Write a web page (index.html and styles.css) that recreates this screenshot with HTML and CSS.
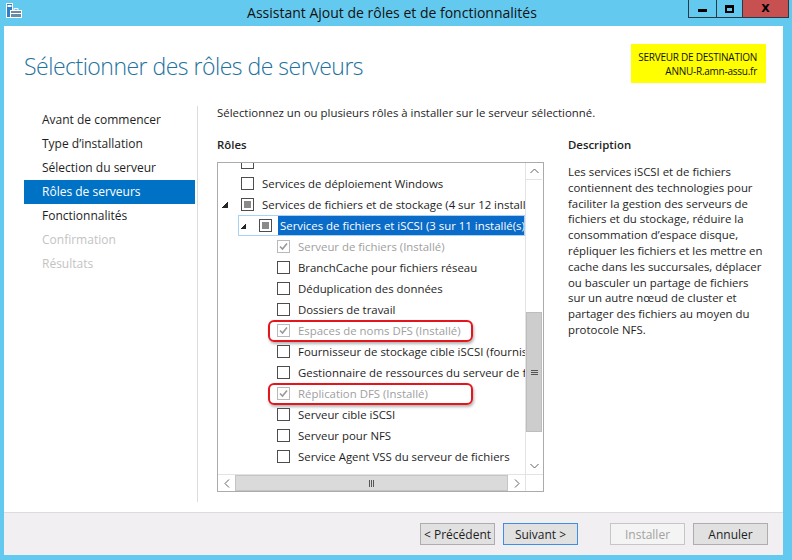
FILE: index.html
```html
<!DOCTYPE html>
<html lang="fr">
<head>
    <meta charset="UTF-8">
    <title>Assistant Ajout de rôles et de fonctionnalités</title>
    <link rel="stylesheet" href="styles.css">
</head>
<body>
    <div class="window">
        <div class="titlebar">
            <div class="app-icon">
                <svg width="22" height="18" viewBox="0 0 22 18">
                    <rect x="6.5" y="3.5" width="6" height="14" fill="#2f7fc8" stroke="#fff"/>
                    <rect x="7.5" y="5" width="4" height="2" fill="#fff"/>
                    <rect x="10.5" y="10.5" width="11" height="7" fill="#6a8aa6" stroke="#fff"/>
                    <path d="M14 10.5 V8.5 H18 V10.5" fill="none" stroke="#fff"/>
                    <path d="M10.5 13.5 H21.5" stroke="#fff"/>
                </svg>
            </div>
            <div class="title">Assistant Ajout de rôles et de fonctionnalités</div>
            <div class="controls">
                <span class="ctl min"><i></i></span>
                <span class="ctl max"><i></i></span>
                <span class="ctl close">X</span>
            </div>
        </div>

        <div class="client">
            <div class="header">
                <h1>Sélectionner des rôles de serveurs</h1>
                <div class="dest">SERVEUR DE DESTINATION<br>ANNU-R.amn-assu.fr</div>
            </div>

            <div class="main">
                <ul class="steps">
                    <li>Avant de commencer</li>
                    <li>Type d’installation</li>
                    <li>Sélection du serveur</li>
                    <li class="active">Rôles de serveurs</li>
                    <li>Fonctionnalités</li>
                    <li class="off">Confirmation</li>
                    <li class="off">Résultats</li>
                </ul>

                <div class="content">
                    <p class="intro">Sélectionnez un ou plusieurs rôles à installer sur le serveur sélectionné.</p>
                    <div class="columns">
                        <div class="roles">
                            <div class="caption">Rôles</div>
                            <div class="listbox">
                                <div class="list-area">
                                    <div class="rows">
                                        <div class="row lvl0 cut"><span class="exp"></span><span class="cb"></span><span class="txt"></span></div>
                                        <div class="row lvl0"><span class="exp"></span><span class="cb"></span><span class="txt">Services de déploiement Windows</span></div>
                                        <div class="row lvl0"><span class="exp open"></span><span class="cb part"></span><span class="txt">Services de fichiers et de stockage (4 sur 12 installé(s))</span></div>
                                        <div class="row lvl1 sel"><span class="exp open"></span><span class="cb part"></span><span class="txt">Services de fichiers et iSCSI (3 sur 11 installé(s))</span></div>
                                        <div class="row lvl2 dis"><span class="exp"></span><span class="cb on"></span><span class="txt">Serveur de fichiers (Installé)</span></div>
                                        <div class="row lvl2"><span class="exp"></span><span class="cb"></span><span class="txt">BranchCache pour fichiers réseau</span></div>
                                        <div class="row lvl2"><span class="exp"></span><span class="cb"></span><span class="txt">Déduplication des données</span></div>
                                        <div class="row lvl2"><span class="exp"></span><span class="cb"></span><span class="txt">Dossiers de travail</span></div>
                                        <div class="row lvl2 dis"><span class="exp"></span><span class="cb on"></span><span class="txt">Espaces de noms DFS (Installé)</span><span class="mark"></span></div>
                                        <div class="row lvl2"><span class="exp"></span><span class="cb"></span><span class="txt">Fournisseur de stockage cible iSCSI (fournisseurs VDS et VSS)</span></div>
                                        <div class="row lvl2"><span class="exp"></span><span class="cb"></span><span class="txt">Gestionnaire de ressources du serveur de fichiers</span></div>
                                        <div class="row lvl2 dis"><span class="exp"></span><span class="cb on"></span><span class="txt">Réplication DFS (Installé)</span><span class="mark"></span></div>
                                        <div class="row lvl2"><span class="exp"></span><span class="cb"></span><span class="txt">Serveur cible iSCSI</span></div>
                                        <div class="row lvl2"><span class="exp"></span><span class="cb"></span><span class="txt">Serveur pour NFS</span></div>
                                        <div class="row lvl2"><span class="exp"></span><span class="cb"></span><span class="txt">Service Agent VSS du serveur de fichiers</span></div>
                                    </div>
                                    <div class="vscroll">
                                        <div class="arrow up"><svg width="9" height="6" viewBox="0 0 9 6"><path d="M0.5 5 L4.5 1 L8.5 5" fill="none" stroke="#606060"/></svg></div>
                                        <div class="track"><div class="thumb"><svg width="7" height="5" viewBox="0 0 7 5"><path d="M0 0.5H7M0 2.5H7M0 4.5H7" stroke="#555"/></svg></div></div>
                                        <div class="arrow down"><svg width="9" height="6" viewBox="0 0 9 6"><path d="M0.5 1 L4.5 5 L8.5 1" fill="none" stroke="#606060"/></svg></div>
                                    </div>
                                </div>
                                <div class="hscroll">
                                    <div class="arrow left"><svg width="6" height="9" viewBox="0 0 6 9"><path d="M5 0.5 L1 4.5 L5 8.5" fill="none" stroke="#606060"/></svg></div>
                                    <div class="hthumb"><svg width="5" height="7" viewBox="0 0 5 7"><path d="M0.5 0V7M2.5 0V7M4.5 0V7" stroke="#555"/></svg></div>
                                    <div class="arrow right"><svg width="6" height="9" viewBox="0 0 6 9"><path d="M1 0.5 L5 4.5 L1 8.5" fill="none" stroke="#606060"/></svg></div>
                                    <div class="corner"></div>
                                </div>
                            </div>
                        </div>

                        <div class="desc">
                            <div class="caption">Description</div>
                            <p>Les services iSCSI et de fichiers<br>contiennent des technologies pour<br>faciliter la gestion des serveurs de<br>fichiers et du stockage, réduire la<br>consommation d’espace disque,<br>répliquer les fichiers et les mettre en<br>cache dans les succursales, déplacer<br>ou basculer un partage de fichiers<br>sur un autre nœud de cluster et<br>partager des fichiers au moyen du<br>protocole NFS.</p>
                        </div>
                    </div>
                </div>
            </div>

            <div class="footer">
                <button>&lt; Précédent</button>
                <button class="default">Suivant &gt;</button>
                <button class="disabled spaced">Installer</button>
                <button>Annuler</button>
            </div>
        </div>
    </div>
</body>
</html>
```

FILE: styles.css
```css
:root {
    --frame: #64c9ef;
    --heading: #22729d;
    --select: #0a6bc8;
    --ui-font: "Segoe UI", "Open Sans", "Noto Sans", sans-serif;
}

body {
    margin: 0;
    background: var(--frame);
    font-family: var(--ui-font);
    font-size: 11.4px;
    color: #1e1e1e;
}

.window {
    width: 792px;
    height: 560px;
    display: flex;
    flex-direction: column;
}

/* barre de titre */
.titlebar {
    height: 26px;
    display: grid;
    grid-template-columns: 1fr auto 1fr;
    align-items: start;
}

.title {
    font-size: 14px;
    line-height: 26px;
    color: #111;
    margin-right: 8px;
}

.controls {
    justify-self: end;
    display: flex;
    margin-right: 3px;
    border: 1px solid #2a3a44;
    border-top: none;
}

.ctl {
    height: 17px;
    display: flex;
    align-items: center;
    justify-content: center;
}

.ctl.min {
    width: 27px;
    border-right: 1px solid #2a3a44;
}

.ctl.min i {
    width: 9px;
    height: 3px;
    background: #000;
    margin-top: 3px;
}

.ctl.max {
    width: 25px;
    border-right: 1px solid #2a3a44;
}

.ctl.max i {
    width: 9px;
    height: 8px;
    box-sizing: border-box;
    border: 2px solid #000;
    border-top-width: 3px;
}

.ctl.close {
    width: 45px;
    background: #c75050;
    font-family: "DejaVu Sans", sans-serif;
    font-weight: bold;
    font-size: 11px;
    color: #000;
}

/* zone cliente */
.client {
    flex: 1;
    margin: 0 9px 5px 4px;
    background: #fff;
    display: flex;
    flex-direction: column;
    min-height: 0;
}

.header {
    height: 80px;
    display: flex;
    justify-content: space-between;
    align-items: flex-start;
    padding: 0 17px 0 20px;
}

h1 {
    margin: 25px 0 0;
    font-size: 23px;
    line-height: 30px;
    font-weight: 300;
    letter-spacing: -0.5px;
    color: var(--heading);
}

.dest {
    margin-top: 18px;
    width: 126px;
    padding: 6px 9px 5px 0;
    background: #ffff00;
    font-size: 10px;
    line-height: 14px;
    letter-spacing: -0.25px;
    text-align: right;
    white-space: nowrap;
    color: #111;
}

.main {
    flex: 1;
    display: flex;
    min-height: 0;
}

.steps {
    list-style: none;
    margin: 2px 0 0 20px;
    padding: 0;
    width: 171px;
    font-size: 12px;
}

.steps li {
    height: 24px;
    line-height: 24px;
    padding-left: 18px;
}

.steps li.active {
    background: #0072c6;
    color: #fff;
}

.steps li.off {
    color: #c3c3c3;
}

.content {
    margin: 0 0 10px 2px;
    padding-left: 19px;
    border-left: 1px solid #dcdcdc;
    flex: 1;
}

.intro {
    margin: 0;
    line-height: 14px;
}

.columns {
    display: flex;
    gap: 24px;
    margin-top: 17px;
}

.caption {
    line-height: 16px;
    font-weight: 600;
}

/* liste des rôles */
.listbox {
    margin-top: 9px;
    width: 325px;
    height: 328px;
    border: 1px solid #ababab;
    display: flex;
    flex-direction: column;
}

.list-area {
    height: 311px;
    display: flex;
}

.rows {
    width: 307px;
    overflow: hidden;
}

.row {
    position: relative;
    height: 21px;
    display: flex;
    align-items: center;
    white-space: nowrap;
}

.row.cut {
    margin-top: -11px;
}

.lvl0 { padding-left: 4px; }
.lvl1 { padding-left: 22px; }
.lvl2 { padding-left: 40px; }

.exp {
    flex: none;
    width: 19px;
    height: 21px;
}

.exp.open {
    background: linear-gradient(to bottom right, transparent 50%, #262626 50%) no-repeat 0 8px / 6px 6px;
}

.cb {
    flex: none;
    box-sizing: border-box;
    width: 13px;
    height: 13px;
    border: 1px solid #4d4d4d;
    background: #fff;
}

.cb.part::after {
    content: "";
    display: block;
    width: 7px;
    height: 7px;
    margin: 2px;
    background: #8a8a8a;
}

.cb.on {
    border-color: #b9b9b9;
    background: #fff url("data:image/svg+xml,%3Csvg xmlns='http://www.w3.org/2000/svg' width='11' height='11'%3E%3Cpath d='M2 5.5 L4.5 8 L9 2.5' fill='none' stroke='%23999' stroke-width='1.6'/%3E%3C/svg%3E") no-repeat center;
}

.txt {
    margin-left: 6px;
    padding: 0 2px;
    line-height: 19px;
}

.dis .txt {
    color: #a0a0a0;
}

.sel::before {
    content: "";
    position: absolute;
    left: 20px;
    right: 0;
    top: 0;
    bottom: 0;
    border: 1px solid #a9d3f5;
}

.sel .txt {
    background: var(--select);
    color: #fff;
    flex: 1;
}

.mark {
    position: absolute;
    left: 50px;
    top: 0;
    width: 201px;
    height: 18px;
    border: 2px solid #e3151d;
    border-radius: 6px;
    box-shadow: 1px 2px 3px rgba(0, 0, 0, 0.3);
}

.vscroll {
    width: 17px;
    box-sizing: border-box;
    border-left: 1px solid #e3e3e3;
    display: flex;
    flex-direction: column;
}

.arrow {
    flex: none;
    display: flex;
    align-items: center;
    justify-content: center;
}

.vscroll .arrow {
    height: 17px;
}

.vscroll .up {
    border-bottom: 1px solid #e3e3e3;
    box-sizing: border-box;
}

.track {
    flex: 1;
    display: flex;
    flex-direction: column;
}

.thumb {
    margin: 132px 0 25px;
    height: 120px;
    background: #cdcdcd;
    border: 1px solid #bdbdbd;
    box-sizing: border-box;
    display: flex;
    align-items: center;
    justify-content: center;
}

.hscroll {
    height: 17px;
    display: flex;
    border-top: 1px solid #e3e3e3;
    box-sizing: border-box;
}

.hscroll .arrow {
    width: 17px;
}

.hthumb {
    width: 273px;
    background: #dadada;
    border: 1px solid #c4c4c4;
    box-sizing: border-box;
    display: flex;
    align-items: center;
    justify-content: center;
}

.corner {
    flex: 1;
    border-left: 1px solid #e3e3e3;
}

.desc p {
    margin: 11px 0 0;
    line-height: 15.8px;
    white-space: nowrap;
}

/* pied */
.footer {
    height: 43px;
    box-sizing: border-box;
    border-top: 1px solid #dcdcdc;
    background: #f2eff2;
    display: flex;
    justify-content: flex-end;
    align-items: flex-start;
    gap: 8px;
    padding: 10px 15px 0 0;
}

button {
    width: 75px;
    height: 22px;
    padding: 0;
    font-family: var(--ui-font);
    font-size: 12px;
    color: #1e1e1e;
    background: #e1e1e1;
    border: 1px solid #adadad;
}

button.default {
    border-color: #3c8ee6;
}

button.disabled {
    background: #f4f4f4;
    border-color: #c6c6c6;
    color: #a2a2a2;
}

button.spaced {
    margin-left: 24px;
}
```
